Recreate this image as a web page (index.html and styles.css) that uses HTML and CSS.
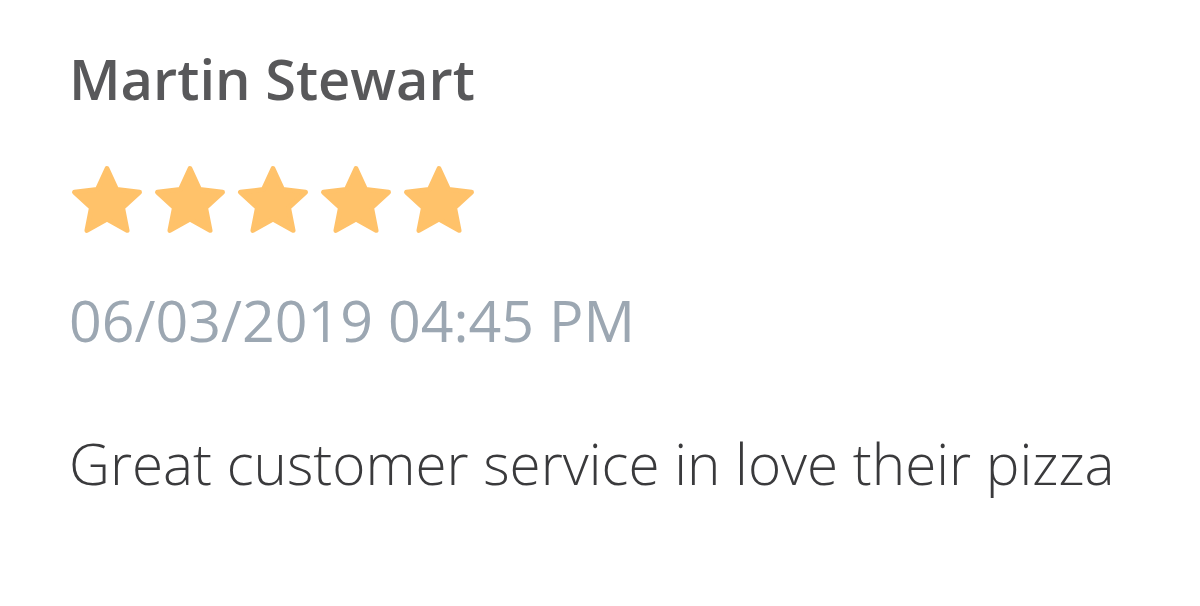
FILE: index.html
```html
<!DOCTYPE html>
<html lang="en">
<head>
<meta charset="utf-8">
<link rel="stylesheet" href="styles.css">
</head>
<body>
<div class="review">
  <div class="name">Martin Stewart</div>
  <div class="stars">
    <svg class="star" viewBox="-4 -4 108 104"><polygon points="50,2 64.11,32.58 97.55,36.55 72.83,59.42 79.39,92.45 50,76 20.61,92.45 27.17,59.42 2.45,36.55 35.89,32.58"/></svg>
    <svg class="star" viewBox="-4 -4 108 104"><polygon points="50,2 64.11,32.58 97.55,36.55 72.83,59.42 79.39,92.45 50,76 20.61,92.45 27.17,59.42 2.45,36.55 35.89,32.58"/></svg>
    <svg class="star" viewBox="-4 -4 108 104"><polygon points="50,2 64.11,32.58 97.55,36.55 72.83,59.42 79.39,92.45 50,76 20.61,92.45 27.17,59.42 2.45,36.55 35.89,32.58"/></svg>
    <svg class="star" viewBox="-4 -4 108 104"><polygon points="50,2 64.11,32.58 97.55,36.55 72.83,59.42 79.39,92.45 50,76 20.61,92.45 27.17,59.42 2.45,36.55 35.89,32.58"/></svg>
    <svg class="star" viewBox="-4 -4 108 104"><polygon points="50,2 64.11,32.58 97.55,36.55 72.83,59.42 79.39,92.45 50,76 20.61,92.45 27.17,59.42 2.45,36.55 35.89,32.58"/></svg>
  </div>
  <div class="date">06/03/2019 04:45 PM</div>
  <div class="text">Great customer service in love their pizza</div>
</div>
</body>
</html>
```

FILE: styles.css
```css
html, body {
  margin: 0;
  padding: 0;
  background: #ffffff;
}
body {
  width: 1200px;
  height: 606px;
  overflow: hidden;
  font-family: "Open Sans", "Liberation Sans", sans-serif;
}
.review {
  padding: 38px 0 0 69px;
  display: flex;
  flex-direction: column;
}
.name {
  font-size: 56px;
  font-weight: 600;
  color: #58585a;
  line-height: 80px;
}
.stars {
  display: flex;
  gap: 9px;
  margin-top: 46px;
  padding-left: 1px;
  height: 74px;
}
.star {
  width: 74px;
  height: 72px;
  fill: #ffc26a;
  stroke: #ffc26a;
  stroke-width: 7;
  stroke-linejoin: round;
}
.date {
  margin-top: 42px;
  font-size: 57.3px;
  font-weight: 400;
  color: #9ca7b2;
  line-height: 80px;
}
.text {
  margin-top: 64px;
  font-size: 56.6px;
  font-weight: 300;
  color: #3a3a3c;
  line-height: 80px;
}
```
